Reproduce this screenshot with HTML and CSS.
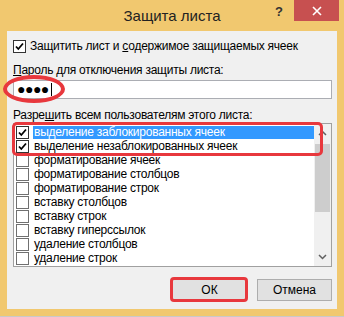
FILE: index.html
```html
<!DOCTYPE html>
<html lang="ru">
<head>
  <meta charset="UTF-8" />
  <title>Защита листа</title>
  <link rel="stylesheet" href="styles.css">
</head>
<body>
  <div class="window">
    <div class="titlebar">
      <span class="title">Защита листа</span>
      <span class="help">?</span>
      <span class="close">
        <svg width="10" height="10" viewBox="0 0 10 10"><path d="M1 1L9 9M9 1L1 9" stroke="#fff" stroke-width="1.6"/></svg>
      </span>
    </div>

    <div class="client">
      <label class="check-row">
        <span class="box checked"><svg viewBox="0 0 11 11"><path d="M2 5.5L4.3 8L9 2.5" fill="none" stroke="#000" stroke-width="1.8"/></svg></span>
        <span>Защитить лист и <u>с</u>одержимое защищаемых ячеек</span>
      </label>

      <div class="label pass-label"><u>П</u>ароль для отключения защиты листа:</div>
      <div class="input"><span class="dots">●●●●</span><span class="caret"></span></div>

      <div class="label list-label">Разре<u>ш</u>ить всем пользователям этого листа:</div>
      <div class="list">
        <div class="items">
          <div class="item selected"><span class="box checked"><svg viewBox="0 0 11 11"><path d="M2 5.5L4.3 8L9 2.5" fill="none" stroke="#000" stroke-width="1.8"/></svg></span><span class="text">выделение заблокированных ячеек</span></div>
          <div class="item"><span class="box checked"><svg viewBox="0 0 11 11"><path d="M2 5.5L4.3 8L9 2.5" fill="none" stroke="#000" stroke-width="1.8"/></svg></span><span class="text">выделение незаблокированных ячеек</span></div>
          <div class="item"><span class="box"></span><span class="text">форматирование ячеек</span></div>
          <div class="item"><span class="box"></span><span class="text">форматирование столбцов</span></div>
          <div class="item"><span class="box"></span><span class="text">форматирование строк</span></div>
          <div class="item"><span class="box"></span><span class="text">вставку столбцов</span></div>
          <div class="item"><span class="box"></span><span class="text">вставку строк</span></div>
          <div class="item"><span class="box"></span><span class="text">вставку гиперссылок</span></div>
          <div class="item"><span class="box"></span><span class="text">удаление столбцов</span></div>
          <div class="item"><span class="box"></span><span class="text">удаление строк</span></div>
        </div>
        <div class="scrollbar">
          <svg class="arrow" width="9" height="6" viewBox="0 0 9 6"><path d="M1 5L4.5 1.5L8 5" fill="none" stroke="#606060" stroke-width="1.5"/></svg>
          <div class="thumb-track"><div class="thumb"></div></div>
          <svg class="arrow" width="9" height="6" viewBox="0 0 9 6"><path d="M1 1L4.5 4.5L8 1" fill="none" stroke="#606060" stroke-width="1.5"/></svg>
        </div>
      </div>

      <div class="buttons">
        <button class="btn ok">ОК</button>
        <button class="btn">Отмена</button>
      </div>

      <!-- red marks drawn over the dialog -->
      <div class="mark ellipse"></div>
      <div class="mark rows"></div>
      <div class="mark okmark"></div>
    </div>
  </div>
</body>
</html>
```

FILE: styles.css
```css
body {
  margin: 0;
  font-family: "Liberation Sans", Arial, sans-serif;
  font-size: 12px;
  letter-spacing: -0.25px;
  color: #000;
}

.window {
  width: 344px;
  height: 317px;
  background: #f1c86f;
  display: flex;
  flex-direction: column;
  box-sizing: border-box;
  border-bottom: 1px solid #c9c9c9;
}

.titlebar {
  height: 31px;
  position: relative;
  display: flex;
  justify-content: center;
  align-items: center;
}

.title {
  font-size: 15px;
  letter-spacing: 0;
  color: #222;
  margin-top: -1px;
}

.help {
  position: absolute;
  left: 275px;
  top: 4px;
  font-weight: bold;
  font-size: 13px;
  color: #333;
}

.close {
  position: absolute;
  left: 294px;
  top: 0;
  width: 45px;
  height: 21px;
  background: #c75050;
  display: flex;
  justify-content: center;
  align-items: center;
}

.close svg { display: block; }

.client {
  position: relative;
  margin: 0 7px 7px 7px;
  flex: 1;
  background: #f0f0f0;
  padding: 9px 5px 0 6px;
  display: flex;
  flex-direction: column;
}

.check-row {
  display: flex;
  align-items: center;
  gap: 4px;
  height: 13px;
  line-height: 13px;
}

.box {
  width: 11px;
  height: 11px;
  border: 1px solid #333;
  background: #fff;
  flex: none;
  display: flex;
}

.box svg {
  width: 11px;
  height: 11px;
}

.label {
  height: 15px;
  line-height: 15px;
}

.pass-label { margin-top: 10px; }

.input {
  margin-top: 2px;
  height: 17px;
  border: 1px solid #abadb3;
  background: #fff;
  display: flex;
  align-items: center;
  padding-left: 3px;
}

.dots {
  font-size: 14px;
  letter-spacing: -0.5px;
  line-height: 13px;
}

.caret {
  width: 1px;
  height: 13px;
  background: #000;
  margin-left: 2px;
}

.list-label { margin-top: 9px; }

.list {
  height: 142px;
  border: 1px solid #a0a0a0;
  background: #fff;
  display: flex;
}

.items {
  flex: 1;
  padding-top: 1px;
}

.item {
  height: 14px;
  display: flex;
  align-items: center;
  padding-left: 2px;
}

.item .box {
  border-color: #707070;
}

.item .box.checked {
  border-color: #333;
}

.item .text {
  margin-left: 4px;
  padding: 0 2px 0 1px;
  line-height: 13px;
  height: 13px;
}

.item.selected .text {
  flex: 1;
  background: #3399ff;
  color: #fff;
}

.scrollbar {
  width: 17px;
  display: flex;
  flex-direction: column;
  align-items: center;
  background: #f0f0f0;
}

.arrow {
  margin: 6px 0;
  flex: none;
}

.thumb-track {
  flex: 1;
  width: 100%;
  padding: 2px 0;
}

.thumb {
  margin: 0 1px;
  height: 68px;
  background: #cdcdcd;
}

.buttons {
  margin-top: 12px;
  display: flex;
  justify-content: flex-end;
  gap: 10px;
}

.btn {
  width: 75px;
  height: 22px;
  border: 1px solid #adadad;
  background: #e1e1e1;
  font-family: inherit;
  font-size: 12px;
  padding: 0;
}

.btn.ok {
  border-color: #0078d7;
}

.mark {
  position: absolute;
  border: 3px solid #e8383d;
  box-sizing: border-box;
}

.ellipse {
  left: -4px;
  top: 44px;
  width: 62px;
  height: 28px;
  border-width: 4px;
  border-radius: 50%;
}

.rows {
  left: 5px;
  top: 91px;
  width: 311px;
  height: 34px;
  border-radius: 5px;
}

.okmark {
  left: 163px;
  top: 246px;
  width: 78px;
  height: 25px;
  border-radius: 4px;
}
```
